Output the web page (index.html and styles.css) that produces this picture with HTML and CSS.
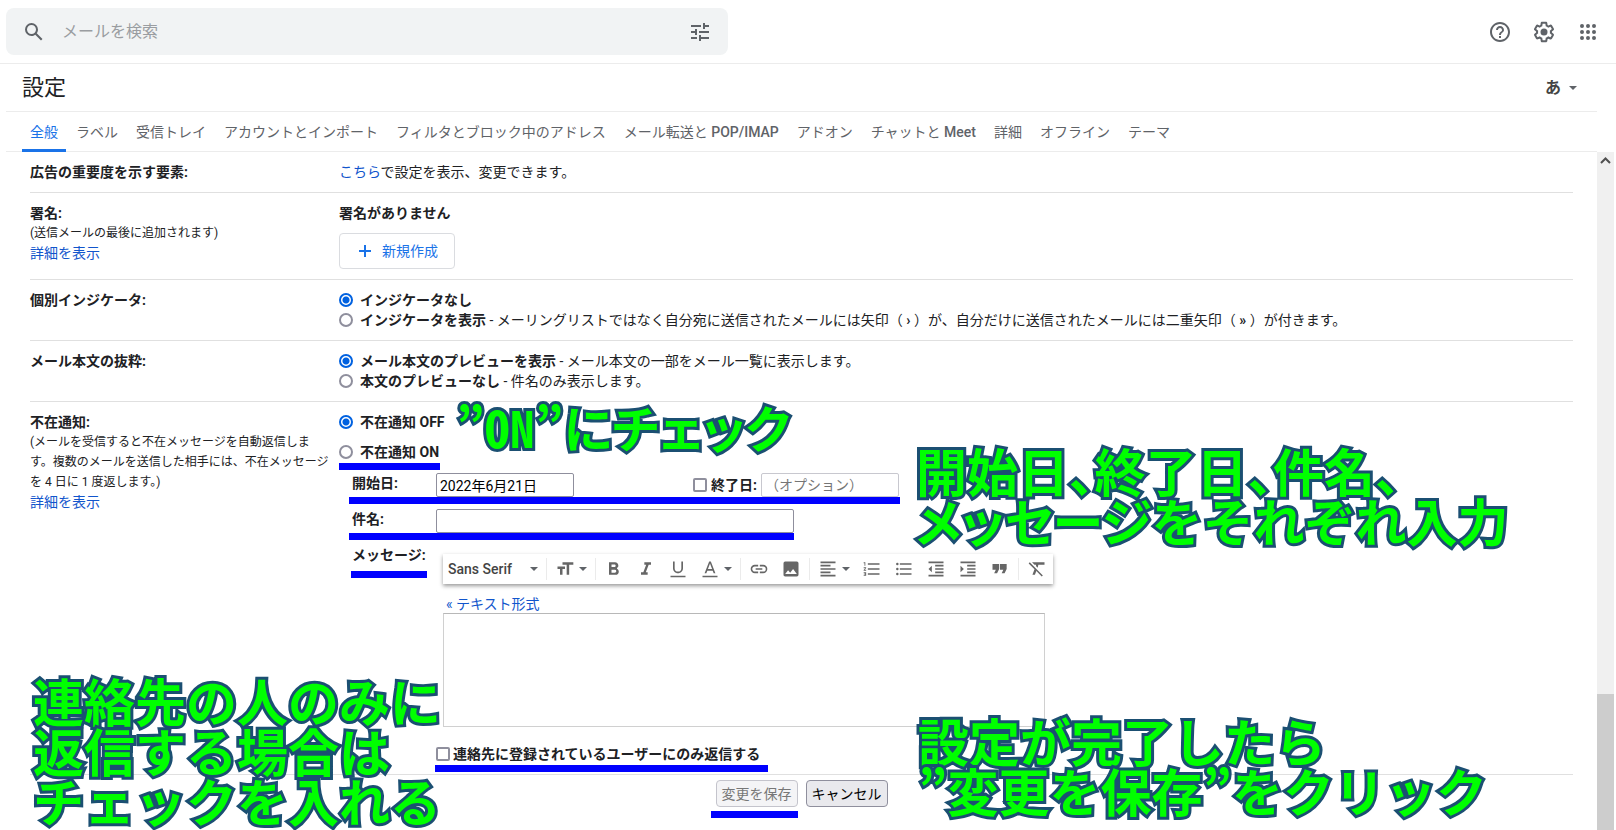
FILE: index.html
```html
<!DOCTYPE html>
<html lang="ja">
<head>
<meta charset="utf-8">
<title>設定</title>
<link rel="stylesheet" href="styles.css">
</head>
<body>
<div class="page">
  <header class="topbar">
    <form class="search" role="search">
      <button class="icon-btn" type="button" aria-label="検索"><svg viewBox="0 0 24 24"><path d="M20.49 19l-5.73-5.73C15.53 12.2 16 10.91 16 9.5A6.5 6.5 0 1 0 9.5 16c1.41 0 2.7-.47 3.77-1.24L19 20.49 20.49 19zM5 9.5C5 7.01 7.01 5 9.5 5S14 7.01 14 9.5 11.99 14 9.5 14 5 11.99 5 9.5z"/></svg></button>
      <input class="search-input" type="text" placeholder="メールを検索" aria-label="メールを検索">
      <button class="icon-btn" type="button" aria-label="検索オプション"><svg viewBox="0 0 24 24"><path d="M3 17v2h6v-2H3zM3 5v2h10V5H3zm10 16v-2h8v-2h-8v-2h-2v6h2zM7 9v2H3v2h4v2h2V9H7zm14 4v-2H11v2h10zm-6-4h2V7h4V5h-4V3h-2v6z"/></svg></button>
    </form>
    <div class="top-actions">
      <button class="icon-btn" type="button" aria-label="サポート"><svg viewBox="0 0 24 24"><path d="M11 18h2v-2h-2v2zm1-16C6.48 2 2 6.48 2 12s4.48 10 10 10 10-4.48 10-10S17.52 2 12 2zm0 18c-4.41 0-8-3.59-8-8s3.590-8 8-8 8 3.590 8 8-3.590 8-8 8zm0-14c-2.210 0-4 1.790-4 4h2c0-1.100.9-2 2-2s2 .9 2 2c0 2-3 1.750-3 5h2c0-2.250 3-2.500 3-5 0-2.210-1.790-4-4-4z"/></svg></button>
      <button class="icon-btn" type="button" aria-label="設定"><svg viewBox="0 0 24 24"><path d="M13.850 22.250h-3.700c-.74 0-1.360-.54-1.450-1.270l-.27-1.890c-.27-.14-.53-.29-.79-.46l-1.800.720c-.7.260-1.470-.03-1.810-.65L2.200 15.530c-.35-.66-.2-1.440.36-1.880l1.530-1.190c-.01-.15-.02-.3-.02-.46 0-.15.010-.31.020-.46l-1.520-1.190c-.59-.45-.74-1.260-.37-1.880l1.850-3.190c.34-.62 1.110-.9 1.790-.63l1.810.730c.26-.17.52-.32.780-.46l.27-1.910c.09-.7.710-1.250 1.440-1.250h3.700c.74 0 1.360.54 1.450 1.270l.27 1.890c.27.140.53.290.79.460l1.800-.72c.71-.26 1.480.03 1.820.650l1.840 3.180c.36.660.2 1.440-.36 1.880l-1.520 1.190c.01.150.02.3.02.460s-.01.310-.02.460l1.520 1.190c.56.450.72 1.230.37 1.860l-1.860 3.220c-.34.620-1.110.9-1.800.630l-1.800-.72c-.26.170-.52.320-.78.460l-.27 1.910c-.1.680-.72 1.220-1.460 1.220zm-3.230-2h2.760l.37-2.550.53-.22c.44-.18.88-.44 1.340-.78l.45-.34 2.380.960 1.380-2.400-2.030-1.580.07-.56c.03-.26.06-.51.060-.78s-.03-.53-.06-.78l-.07-.56 2.030-1.580-1.390-2.400-2.390.960-.45-.35c-.42-.32-.87-.58-1.330-.77l-.52-.22-.37-2.550h-2.760l-.37 2.550-.53.210c-.44.190-.88.440-1.340.790l-.45.330-2.380-.95-1.390 2.390 2.030 1.580-.07.560a7 7 0 0 0-.06.790c0 .260.02.530.06.780l.07.560-2.030 1.580 1.380 2.400 2.390-.96.450.350c.43.330.86.580 1.330.770l.53.220.38 2.550z"/><circle cx="12" cy="12" r="3.500"/></svg></button>
      <button class="icon-btn" type="button" aria-label="アプリ"><svg viewBox="0 0 24 24"><path d="M6 8a2 2 0 1 0 0-4 2 2 0 0 0 0 4zm6 12a2 2 0 1 0 0-4 2 2 0 0 0 0 4zm-6 0a2 2 0 1 0 0-4 2 2 0 0 0 0 4zm0-6a2 2 0 1 0 0-4 2 2 0 0 0 0 4zm6 0a2 2 0 1 0 0-4 2 2 0 0 0 0 4zm4-8a2 2 0 1 0 4 0 2 2 0 0 0-4 0zm-4 2a2 2 0 1 0 0-4 2 2 0 0 0 0 4zm6 6a2 2 0 1 0 0-4 2 2 0 0 0 0 4zm0 6a2 2 0 1 0 0-4 2 2 0 0 0 0 4z"/></svg></button>
    </div>
  </header>

  <div class="title-bar">
    <h1 class="title">設定</h1>
    <button class="lang" type="button">あ<span class="caret"></span></button>
  </div>

  <nav class="tabs">
    <a class="tab tab-active" href="#">全般</a>
    <a class="tab" href="#">ラベル</a>
    <a class="tab" href="#">受信トレイ</a>
    <a class="tab" href="#">アカウントとインポート</a>
    <a class="tab" href="#">フィルタとブロック中のアドレス</a>
    <a class="tab" href="#">メール転送と <span class="latin">POP/IMAP</span></a>
    <a class="tab" href="#">アドオン</a>
    <a class="tab" href="#">チャットと <span class="latin">Meet</span></a>
    <a class="tab" href="#">詳細</a>
    <a class="tab" href="#">オフライン</a>
    <a class="tab" href="#">テーマ</a>
  </nav>

  <div class="body">
    <main class="settings">
      <section class="row">
        <div class="head"><b>広告の重要度を示す要素:</b></div>
        <div class="value"><a href="#">こちら</a>で設定を表示、変更できます。</div>
      </section>

      <section class="row">
        <div class="head"><b>署名:</b><p class="note">(送信メールの最後に追加されます)</p><a href="#">詳細を表示</a></div>
        <div class="value">
          <b>署名がありません</b>
          <button class="create" type="button"><svg viewBox="0 0 14 14"><path d="M6 1h2v5h5v2H8v5H6V8H1V6h5z"/></svg>新規作成</button>
        </div>
      </section>

      <section class="row">
        <div class="head"><b>個別インジケータ:</b></div>
        <div class="value">
          <label class="option"><input class="radio" type="radio" name="indicator" checked><span><b>インジケータなし</b></span></label>
          <label class="option"><input class="radio" type="radio" name="indicator"><span><b>インジケータを表示</b> - メーリングリストではなく自分宛に送信されたメールには矢印（ <b>›</b> ）が、自分だけに送信されたメールには二重矢印（ <b>»</b> ）が付きます。</span></label>
        </div>
      </section>

      <section class="row">
        <div class="head"><b>メール本文の抜粋:</b></div>
        <div class="value">
          <label class="option"><input class="radio" type="radio" name="snippet" checked><span><b>メール本文のプレビューを表示</b> - メール本文の一部をメール一覧に表示します。</span></label>
          <label class="option"><input class="radio" type="radio" name="snippet"><span><b>本文のプレビューなし</b> - 件名のみ表示します。</span></label>
        </div>
      </section>

      <section class="row">
        <div class="head"><b>不在通知:</b><p class="note">(メールを受信すると不在メッセージを自動返信しま<br>す。複数のメールを送信した相手には、不在メッセージ<br>を 4 日に 1 度返します。)</p><a href="#">詳細を表示</a></div>
        <div class="value">
          <div class="vacation-options">
            <label class="option"><input class="radio" type="radio" name="vacation" checked><b>不在通知 OFF</b></label>
            <label class="option"><input class="radio" type="radio" name="vacation"><b>不在通知 ON</b></label>
          </div>
          <div class="form">
            <label class="form-label" for="start">開始日:</label>
            <div class="dates">
              <input class="text date" id="start" type="text" value="2022年6月21日">
              <div class="end">
                <input class="check" id="use-end" type="checkbox">
                <label for="use-end"><b>終了日:</b></label>
                <input class="text date date-off" type="text" placeholder="（オプション）" aria-label="終了日">
              </div>
            </div>
            <label class="form-label" for="subject">件名:</label>
            <input class="text subject" id="subject" type="text">
            <label class="form-label message-label" for="message">メッセージ:</label>
            <div class="editor">
              <div class="toolbar">
                <button class="tool tool-font" type="button">Sans Serif<span class="caret"></span></button>
                <span class="sep"></span>
                <button class="tool tool-wide" type="button" aria-label="サイズ"><svg viewBox="0 0 24 24"><path d="M9 4v3h5v12h3V7h5V4H9zm-6 8h3v7h3v-7h3V9H3v3z"/></svg><span class="caret"></span></button>
                <span class="sep"></span>
                <button class="tool" type="button" aria-label="太字"><svg viewBox="0 0 24 24"><path d="M15.600 10.790c.97-.67 1.650-1.770 1.650-2.790 0-2.260-1.750-4-4-4H6v15h8.040c2.090 0 3.710-1.700 3.710-3.790 0-1.520-.86-2.820-2.150-3.420zM9 6.500h3.500c.83 0 1.500.67 1.500 1.500s-.67 1.500-1.500 1.500H9v-3zm4 10H9v-3.500h4a1.750 1.750 0 0 1 0 3.500z"/></svg></button>
                <button class="tool" type="button" aria-label="斜体"><svg viewBox="0 0 24 24"><path d="M10 4v3h2.210l-3.420 9H6v3h8v-3h-2.210l3.420-9H18V4z"/></svg></button>
                <button class="tool" type="button" aria-label="下線"><svg viewBox="0 0 24 24"><path d="M12 17c3.310 0 6-2.690 6-6V3h-2v8a4 4 0 0 1-8 0V3H6v8c0 3.310 2.690 6 6 6zm-9 3v2h18v-2H3z"/></svg></button>
                <button class="tool tool-wide" type="button" aria-label="文字色"><svg viewBox="0 0 24 24"><path d="M3 20v2h18v-2H3zM11 3L5.500 17h2.100l1.200-3h6.400l1.200 3h2.100L13 3h-2zm-1.500 9L12 5.500l2.500 6.500h-5z"/></svg><span class="caret"></span></button>
                <span class="sep"></span>
                <button class="tool" type="button" aria-label="リンク"><svg viewBox="0 0 24 24"><path d="M3.900 12c0-1.710 1.390-3.100 3.100-3.100h4V7H7a5 5 0 0 0 0 10h4v-1.900H7c-1.710 0-3.100-1.390-3.100-3.100zM8 13h8v-2H8v2zm9-6h-4v1.900h4a3.100 3.100 0 0 1 0 6.200h-4V17h4a5 5 0 0 0 0-10z"/></svg></button>
                <button class="tool" type="button" aria-label="画像"><svg viewBox="0 0 24 24"><path d="M21 19V5a2 2 0 0 0-2-2H5a2 2 0 0 0-2 2v14c0 1.100.9 2 2 2h14a2 2 0 0 0 2-2zM8.500 13.500l2.500 3.010L14.500 12l4.500 6H5l3.500-4.500z"/></svg></button>
                <span class="sep"></span>
                <button class="tool tool-wide" type="button" aria-label="配置"><svg viewBox="0 0 24 24"><path d="M15 15H3v2h12v-2zm0-8H3v2h12V7zM3 13h18v-2H3v2zm0 8h18v-2H3v2zM3 3v2h18V3H3z"/></svg><span class="caret"></span></button>
                <button class="tool" type="button" aria-label="番号付きリスト"><svg viewBox="0 0 24 24"><path d="M2 17h2v.5H3v1h1v.5H2v1h3v-4H2v1zm1-9h1V4H2v1h1v3zm-1 3h1.800L2 13.100v.9h3v-1H3.200L5 10.900V10H2v1zm5-6v2h14V5H7zm0 14h14v-2H7v2zm0-6h14v-2H7v2z"/></svg></button>
                <button class="tool" type="button" aria-label="箇条書き"><svg viewBox="0 0 24 24"><path d="M4 10.500a1.500 1.500 0 1 0 0 3 1.500 1.500 0 0 0 0-3zm0-6a1.500 1.500 0 1 0 0 3 1.500 1.500 0 0 0 0-3zm0 12a1.500 1.500 0 1 0 0 3 1.500 1.500 0 0 0 0-3zM7 19h14v-2H7v2zm0-6h14v-2H7v2zm0-8v2h14V5H7z"/></svg></button>
                <button class="tool" type="button" aria-label="インデント減"><svg viewBox="0 0 24 24"><path d="M11 17h10v-2H11v2zm-8-5l4 4V8l-4 4zm0 9h18v-2H3v2zM3 3v2h18V3H3zm8 6h10V7H11v2zm0 4h10v-2H11v2z"/></svg></button>
                <button class="tool" type="button" aria-label="インデント増"><svg viewBox="0 0 24 24"><path d="M3 21h18v-2H3v2zM3 8v8l4-4-4-4zm8 9h10v-2H11v2zM3 3v2h18V3H3zm8 6h10V7H11v2zm0 4h10v-2H11v2z"/></svg></button>
                <button class="tool" type="button" aria-label="引用"><svg viewBox="0 0 24 24"><path d="M5 17h3.500l2.500-5V6H3v7h4zm9 0h3.500l2.500-5V6h-8v7h4z"/></svg></button>
                <span class="sep"></span>
                <button class="tool" type="button" aria-label="書式をクリア"><svg viewBox="0 0 24 24"><path d="M6 4l3 3h2l-.3 1.500 2.100 2.100L13.600 7H21V4H6zM3.300 4L2 5.300l7 7L6.500 19h3l1.700-4.500L17.700 21l1.300-1.300L3.300 4z"/></svg></button>
              </div>
              <a class="plain" href="#">« テキスト形式</a>
              <textarea class="message" id="message"></textarea>
            </div>
          </div>
          <label class="contacts"><input class="check" type="checkbox"><b>連絡先に登録されているユーザーにのみ返信する</b></label>
        </div>
      </section>

      <footer class="actions">
        <button class="action" type="button" disabled>変更を保存</button>
        <button class="action" type="button">キャンセル</button>
      </footer>
    </main>
    <div class="scrollbar"><svg class="scroll-up" viewBox="0 0 17 17"><path d="M4 11l4.500-4.500L13 11"/></svg><div class="thumb"></div></div>
  </div>

  <div class="marks">
    <span class="line line-on"></span>
    <span class="line line-dates"></span>
    <span class="line line-subject"></span>
    <span class="line line-message"></span>
    <span class="line line-contacts"></span>
    <span class="line line-save"></span>
    <p class="callout callout-on"><span class="prop">”</span><span class="half">ON</span><span class="prop">”にチェック</span></p>
    <p class="callout callout-fields">開始日<span class="prop">、</span>終了日<span class="prop">、</span>件名<span class="prop">、</span><br><span class="prop">メッセージ</span>をそれぞれ入力</p>
    <p class="callout callout-contacts">連絡先の人のみに<br>返信する場合は<br>チェックを入れる</p>
    <p class="callout callout-save">設定が完了したら<br><span class="prop">”</span>変更を保存<span class="prop">”</span>をクリック</p>
  </div>
</div>
</body>
</html>
```
FILE: styles.css
```css
* { box-sizing: border-box; }
body {
  margin: 0;
  color: #202124;
  background: #fff;
  font: 14px/20px Roboto, "Noto Sans CJK JP", sans-serif;
}
button, input, textarea { font: inherit; margin: 0; }
button { padding: 0; border: 0; background: none; color: inherit; }
svg { display: block; fill: currentColor; }
a { color: #1155cc; text-decoration: none; }
p, h1 { margin: 0; }

.page {
  position: relative;
  display: flex;
  flex-direction: column;
  min-height: 100vh;
  overflow: hidden;
}

.topbar {
  display: flex;
  justify-content: space-between;
  padding: 8px 16px 8px 6px;
  border-bottom: 1px solid #ececec;
  color: #5f6368;
}
.search {
  display: flex;
  align-items: center;
  width: 50%;
  max-width: 722px;
  height: 47px;
  padding: 0 16px;
  background: #f1f3f4;
  border-radius: 8px;
}
.icon-btn svg { width: 24px; height: 24px; }
.search-input {
  flex: 1;
  min-width: 0;
  margin-left: 14px;
  border: 0;
  outline: 0;
  background: none;
  font-size: 16px;
}
.search-input::placeholder { color: #9a9da1; opacity: 1; }
.top-actions { display: flex; align-items: center; gap: 20px; }

.title-bar {
  display: flex;
  align-items: center;
  justify-content: space-between;
  height: 48px;
  margin: 0 19px 0 6px;
  padding: 0 20px 0 16px;
  border-bottom: 1px solid #ececec;
}
.title { font-size: 22px; font-weight: 400; line-height: 28px; }
.lang {
  display: flex;
  align-items: center;
  gap: 8px;
  color: #444;
  font-size: 16px;
  font-weight: 700;
}
.caret {
  border: 4px solid transparent;
  border-top-color: #5f6368;
  border-bottom: 0;
}

.tabs {
  display: flex;
  gap: 2px;
  height: 40px;
  margin: 0 19px 0 6px;
  padding-left: 16px;
  border-bottom: 1px solid #ececec;
}
.tab {
  height: 40px;
  padding: 0 8px;
  color: #5f6368;
  line-height: 40px;
  white-space: nowrap;
}
.tab-active { color: #1a73e8; border-bottom: 3px solid #1a73e8; }
.latin { font-weight: 500; }

.body { display: flex; flex: 1; }
.settings { flex: 1; min-width: 0; padding: 0 24px 0 30px; }
.scrollbar {
  display: flex;
  flex-direction: column;
  width: 17px;
  margin-right: 2px;
  background: #f0f0f0;
}
.scroll-up { width: 17px; fill: none; stroke: #505050; stroke-width: 2; }
.thumb { height: 20%; margin-top: auto; background: #cdcdcd; }

.row {
  display: flex;
  padding: 10px 0;
  border-bottom: 1px solid #e0e0e0;
}
.head { flex: none; width: 309px; white-space: nowrap; }
.note { font-size: 12px; line-height: 20px; }
.value { flex: 1; min-width: 0; }
.create {
  display: flex;
  align-items: center;
  gap: 10px;
  height: 36px;
  margin-top: 10px;
  padding: 0 16px 0 18px;
  border: 1px solid #dadce0;
  border-radius: 4px;
  color: #1a73e8;
}
.create svg { width: 14px; height: 14px; }

.option { display: flex; align-items: center; gap: 7px; }
.radio {
  appearance: none;
  flex: none;
  width: 14px;
  height: 14px;
  border: 2px solid #8f8f9d;
  border-radius: 50%;
  background: #fff;
}
.radio:checked {
  border-color: #0061e0;
  background: radial-gradient(circle, #0061e0 3px, #fff 4px);
}
.check {
  appearance: none;
  flex: none;
  width: 14px;
  height: 14px;
  border: 2px solid #8f8f9d;
  border-radius: 2px;
  background: #fff;
}
.vacation-options { display: grid; gap: 10px; }

.form {
  display: grid;
  grid-template-columns: 84px 1fr;
  row-gap: 12px;
  align-items: center;
  margin: 11px 0 0 13px;
}
.form-label { align-self: start; font-weight: 700; white-space: nowrap; }
.dates { display: flex; justify-content: space-between; width: 463px; }
.end { display: flex; align-items: center; gap: 4px; }
.text {
  height: 24px;
  padding: 0 3px;
  border: 1px solid #8f8f9d;
  border-radius: 2px;
  background: #fff;
  color: #000;
}
.date { width: 138px; }
.date-off { border-color: #c8c8cf; }
.text::placeholder { color: #757575; opacity: 1; }
.subject { width: 358px; }

.editor { margin: 9px 0 0 7px; width: 610px; }
.toolbar {
  display: flex;
  align-items: center;
  height: 30px;
  background: #fff;
  color: #666;
  box-shadow: 0 2px 4px rgba(0, 0, 0, .4);
}
.tool {
  display: flex;
  align-items: center;
  justify-content: center;
  flex: none;
  width: 32px;
  height: 30px;
}
.tool svg { width: 20px; height: 20px; }
.tool-font {
  justify-content: space-between;
  width: 101px;
  padding: 0 6px 0 5px;
  color: #444;
  font-weight: 500;
}
.tool-wide { width: 44px; gap: 4px; }
.sep { flex: none; width: 1px; height: 22px; margin: 0 2px; background: #ebebeb; }
.plain { display: block; margin: 11px 0 0 3px; line-height: 18px; }
.message {
  display: block;
  width: 602px;
  height: 114px;
  border: 1px solid #d0d0d0;
  border-top-color: #b8b8b8;
  background: #fff;
  resize: none;
}
.contacts { display: flex; align-items: center; gap: 3px; margin: 17px 0 0 97px; }

.actions {
  display: flex;
  justify-content: center;
  gap: 8px;
  padding: 5px 0 10px;
}
.action {
  height: 27px;
  padding: 0 5px;
  border: 1px solid #8f8f9d;
  border-radius: 4px;
  background: #e9e9ed;
  color: #000;
}
.action:disabled { border-color: #c4c4cc; background: #f4f4f6; color: #777; }

.marks { position: absolute; inset: 0; pointer-events: none; }
.line { position: absolute; height: 7px; background: #00f; }
.line-on { left: 339px; top: 463px; width: 101px; }
.line-dates { left: 349px; top: 497px; width: 551px; }
.line-subject { left: 349px; top: 533px; width: 445px; }
.line-message { left: 351px; top: 571px; width: 76px; }
.line-contacts { left: 435px; top: 765px; width: 333px; }
.line-save { left: 711px; top: 811px; width: 87px; }
.callout {
  position: absolute;
  color: #0f0;
  font: 700 51px/50px "Noto Sans CJK JP", sans-serif;
  white-space: nowrap;
  -webkit-text-stroke: 6px #1b4f72;
  paint-order: stroke fill;
}
.prop { font-feature-settings: "palt"; }
.half { font-feature-settings: "hwid"; }
.callout-on { left: 456px; top: 401px; font-size: 50px; }
.callout-fields { left: 916px; top: 445px; }
.callout-contacts { left: 33px; top: 675px; }
.callout-save { left: 918px; top: 715px; }
```
